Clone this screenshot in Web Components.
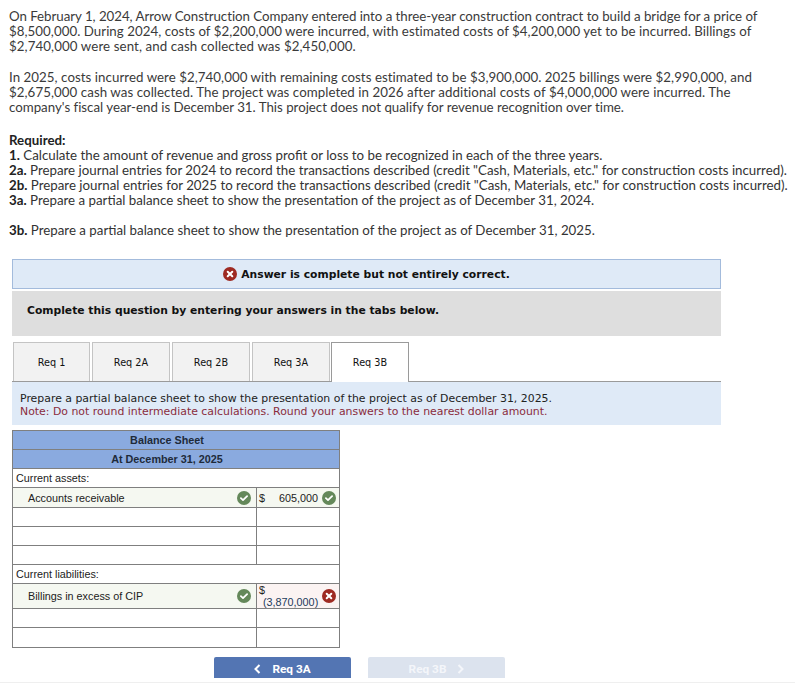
<!DOCTYPE html>
<html lang="en">
<head>
<meta charset="utf-8">
<title>Balance sheet question</title>
<style>
  html, body { margin: 0; padding: 0; background: #fff; }
  body { width: 795px; height: 687px; overflow: hidden; }
</style>
</head>
<body>
<question-page></question-page>

<script>
// Round status badge, green tick or red cross
class StatusIcon extends HTMLElement {
    constructor() {
        super();
        this.attachShadow({ mode: 'open' });
    }

    connectedCallback() {
        const bad = this.getAttribute('kind') === 'bad';
        const fill = bad ? '#9e2a22' : '#64885a';
        const mark = bad
            ? '<path d="M4.7 4.7 9.3 9.3M9.3 4.7 4.7 9.3" stroke="#fff" stroke-width="2" stroke-linecap="round" fill="none"/>'
            : '<path d="M3.9 7.2 6 9.1 10.1 5.2" stroke="#fff" stroke-width="1.8" stroke-linecap="round" stroke-linejoin="round" fill="none"/>';
        this.shadowRoot.innerHTML = `
        <style>
            :host { display: inline-block; width: 14px; height: 14px; flex: none; }
            svg { display: block; width: 14px; height: 14px; }
        </style>
        <svg viewBox="0 0 14 14"><circle cx="7" cy="7" r="7" fill="${fill}"/>${mark}</svg>`;
    }
}

// Problem statement at the top of the page
class QuestionText extends HTMLElement {
    constructor() {
        super();
        this.attachShadow({ mode: 'open' });
        this.shadowRoot.innerHTML = `
        <style>
            :host {
                display: block;
                padding: 9px 0 0 9px;
                font-family: "Lato", "Open Sans", sans-serif;
                font-size: 13.3px;
                line-height: 15px;
                color: #3a3a3a;
                white-space: nowrap;
            }
            p { margin: 0 0 16px; }
            .head { margin: 18px 0 0; font-weight: 700; color: #222; }
            .req { color: #333; }
            .req.gap { margin-top: 15px; }
            b { color: #222; }
        </style>
        <p><span style="letter-spacing:-.04px">On February 1, 2024, Arrow Construction Company entered into a three-year construction contract to build a bridge for a price of</span><br><span style="letter-spacing:.04px">$8,500,000. During 2024, costs of $2,200,000 were incurred, with estimated costs of $4,200,000 yet to be incurred. Billings of</span><br><span style="letter-spacing:.09px">$2,740,000 were sent, and cash collected was $2,450,000.</span></p>
        <p><span style="letter-spacing:.045px">In 2025, costs incurred were $2,740,000 with remaining costs estimated to be $3,900,000. 2025 billings were $2,990,000, and</span><br><span style="letter-spacing:.06px">$2,675,000 cash was collected. The project was completed in 2026 after additional costs of $4,000,000 were incurred. The</span><br><span style="letter-spacing:-.01px">company's fiscal year-end is December 31. This project does not qualify for revenue recognition over time.</span></p>
        <div class="head">Required:</div>
        <div class="req"><b>1.</b> Calculate the amount of revenue and gross profit or loss to be recognized in each of the three years.</div>
        <div class="req"><b>2a.</b> Prepare journal entries for 2024 to record the transactions described (credit "Cash, Materials, etc." for construction costs incurred).</div>
        <div class="req"><b>2b.</b> Prepare journal entries for 2025 to record the transactions described (credit "Cash, Materials, etc." for construction costs incurred).</div>
        <div class="req"><b>3a.</b> Prepare a partial balance sheet to show the presentation of the project as of December 31, 2024.</div>
        <div class="req gap"><b>3b.</b> Prepare a partial balance sheet to show the presentation of the project as of December 31, 2025.</div>`;
    }
}

class AnswerBanner extends HTMLElement {
    constructor() {
        super();
        this.attachShadow({ mode: 'open' });
        this.shadowRoot.innerHTML = `
        <style>
            :host {
                display: flex;
                align-items: center;
                justify-content: center;
                gap: 4px;
                box-sizing: border-box;
                width: 709px;
                height: 30px;
                margin: 21px 0 0 12px;
                background: #dfeaf7;
                border: 1px solid #a3bbdc;
                font: 700 10.75px "DejaVu Sans", Verdana, sans-serif;
                color: #111;
            }
        </style>
        <slot></slot>`;
    }
}

class InstructionBar extends HTMLElement {
    constructor() {
        super();
        this.attachShadow({ mode: 'open' });
        this.shadowRoot.innerHTML = `
        <style>
            :host {
                display: flex;
                align-items: center;
                box-sizing: border-box;
                width: 709px;
                height: 45px;
                margin: 2px 0 0 12px;
                padding: 0 0 6px 15px;
                background: #dedede;
                font: 700 10.75px "DejaVu Sans", Verdana, sans-serif;
                color: #111;
            }
        </style>
        <slot></slot>`;
    }
}

class ReqTabs extends HTMLElement {
    constructor() {
        super();
        this.attachShadow({ mode: 'open' });
        const tabs = ['Req 1', 'Req 2A', 'Req 2B', 'Req 3A', 'Req 3B'];
        const active = tabs.length - 1;
        const items = tabs.map((t, i) =>
            `<div class="tab${i === active ? ' on' : ''}">${t}</div>`).join('');
        this.shadowRoot.innerHTML = `
        <style>
            :host {
                display: flex;
                gap: 2px;
                box-sizing: border-box;
                width: 709px;
                height: 40px;
                margin: 6px 0 0 12px;
                padding-left: 1px;
                border-bottom: 1px solid #9a9a9a;
                font: 9.7px "DejaVu Sans", Verdana, sans-serif;
                color: #111;
            }
            .tab {
                box-sizing: border-box;
                width: 78px;
                height: 39px;
                display: flex;
                align-items: center;
                justify-content: center;
                background: #f2f2f2;
                border: 1px solid #c4c4c4;
                border-bottom: none;
            }
            .tab:nth-child(2) { width: 77px; }
            .on {
                height: 40px;
                background: #fff;
                border-color: #9a9a9a;
                margin-left: -1px;
            }
        </style>
        ${items}`;
    }
}

class InfoPanel extends HTMLElement {
    constructor() {
        super();
        this.attachShadow({ mode: 'open' });
        this.shadowRoot.innerHTML = `
        <style>
            :host {
                display: block;
                box-sizing: border-box;
                width: 709px;
                height: 43px;
                margin-left: 12px;
                padding: 10px 0 0 8px;
                background: #dfeaf7;
                font: 10.9px/13px "DejaVu Sans", Verdana, sans-serif;
                color: #222;
            }
            .note { color: #8a2c3c; }
        </style>
        <div>Prepare a partial balance sheet to show the presentation of the project as of December 31, 2025.</div>
        <div class="note">Note: Do not round intermediate calculations. Round your answers to the nearest dollar amount.</div>`;
    }
}

class BalanceSheet extends HTMLElement {
    constructor() {
        super();
        this.attachShadow({ mode: 'open' });
        const tick = '<status-icon></status-icon>';
        const cross = '<status-icon kind="bad"></status-icon>';
        const blank = h => `<tr style="height:${h}px"><td></td><td></td></tr>`;
        this.shadowRoot.innerHTML = `
        <style>
            :host {
                display: block;
                width: 327px;
                margin: 5px 0 0 12px;
                font: 10.8px "Liberation Sans", Arial, sans-serif;
                color: #222;
            }
            table { border-collapse: collapse; width: 327px; table-layout: fixed; }
            td { border: 1px solid #7f7f7f; padding: 0; }
            .hd td { background: #8aaadf; text-align: center; font-weight: 700; color: #1e2a3a; padding-right: 18px; }
            .lbl td { padding-left: 3px; }
            .row td:first-child { background: #f5f8f1; }
            .in { display: flex; align-items: center; justify-content: space-between; padding: 0 5px 0 15px; }
            .val { display: flex; align-items: center; padding: 0 3px 0 2px; }
            .amt { flex: 1; text-align: right; padding-right: 4px; }
            .good { background: #f5f8f1; }
            .wrong { background: #fbf3f2; }
            .stack { flex: 1; line-height: 12px; }
            .stack div:last-child { padding-left: 4px; color: #223a5a; }
        </style>
        <table>
            <col style="width:244px"><col style="width:83px">
            <tr class="hd" style="height:19px"><td colspan="2">Balance Sheet</td></tr>
            <tr class="hd" style="height:19px"><td colspan="2">At December 31, 2025</td></tr>
            <tr class="lbl" style="height:19px"><td colspan="2">Current assets:</td></tr>
            <tr class="row" style="height:20px">
                <td><div class="in"><span>Accounts receivable</span>${tick}</div></td>
                <td class="good"><div class="val"><span>$</span><span class="amt">605,000</span>${tick}</div></td>
            </tr>
            ${blank(19)}${blank(19)}${blank(19)}
            <tr class="lbl" style="height:19px"><td colspan="2">Current liabilities:</td></tr>
            <tr class="row" style="height:25px">
                <td><div class="in"><span>Billings in excess of CIP</span>${tick}</div></td>
                <td class="wrong"><div class="val"><div class="stack"><div>$</div><div>(3,870,000)</div></div>${cross}</div></td>
            </tr>
            ${blank(19)}${blank(20)}
        </table>`;
    }
}

class NavButton extends HTMLElement {
    constructor() {
        super();
        this.attachShadow({ mode: 'open' });
        this.shadowRoot.innerHTML = `
        <style>
            :host {
                display: flex;
                align-items: center;
                justify-content: center;
                gap: 11px;
                box-sizing: border-box;
                width: 137px;
                height: 21px;
                padding-top: 2px;
                background: #5375b3;
                color: #fff;
                border-radius: 2px 2px 0 0;
                font: 700 11.8px Roboto, sans-serif;
            }
            :host([disabled]) { background: #dce3ee; color: #f4f6fa; }
        </style>
        <slot name="before"></slot><slot></slot><slot name="after"></slot>`;
    }
}

class QuestionPage extends HTMLElement {
    constructor() {
        super();
        this.attachShadow({ mode: 'open' });
        const left = '<svg slot="before" width="7" height="10" viewBox="0 0 7 10"><path d="M5.5 1 1.5 5 5.5 9" stroke="#fff" stroke-width="2" fill="none"/></svg>';
        const right = '<svg slot="after" width="7" height="10" viewBox="0 0 7 10"><path d="M1.5 1 5.5 5 1.5 9" stroke="#f4f6fa" stroke-width="2" fill="none"/></svg>';
        this.shadowRoot.innerHTML = `
        <style>
            :host { display: block; width: 795px; height: 687px; }
            .nav { display: flex; gap: 17px; margin: 9px 0 0 214px; }
            .rule { height: 1px; margin-top: 4px; background: #efefef; }
        </style>
        <question-text></question-text>
        <answer-banner><status-icon kind="bad"></status-icon><span>Answer is complete but not entirely correct.</span></answer-banner>
        <instruction-bar>Complete this question by entering your answers in the tabs below.</instruction-bar>
        <req-tabs></req-tabs>
        <info-panel></info-panel>
        <balance-sheet></balance-sheet>
        <div class="nav">
            <nav-button>${left}Req 3A</nav-button>
            <nav-button disabled>Req 3B${right}</nav-button>
        </div>
        <div class="rule"></div>`;
    }
}

customElements.define('status-icon', StatusIcon);
customElements.define('question-text', QuestionText);
customElements.define('answer-banner', AnswerBanner);
customElements.define('instruction-bar', InstructionBar);
customElements.define('req-tabs', ReqTabs);
customElements.define('info-panel', InfoPanel);
customElements.define('balance-sheet', BalanceSheet);
customElements.define('nav-button', NavButton);
customElements.define('question-page', QuestionPage);
</script>
</body>
</html>
